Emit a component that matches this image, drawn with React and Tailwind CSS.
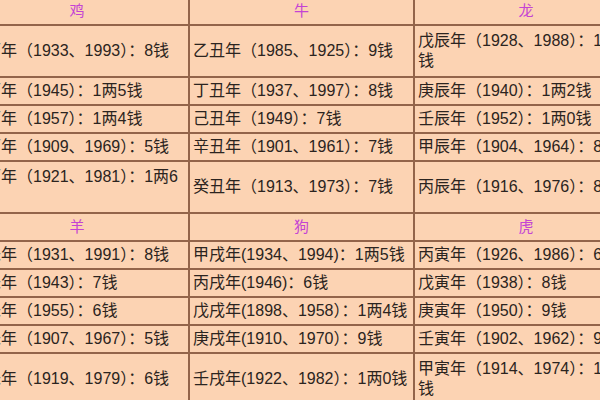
import React from "react";

const headers1 = ["鸡", "牛", "龙"];
const rows1 = [
  ["癸酉年（1933、1993）：8钱", "乙丑年（1985、1925）：9钱", "戊辰年（1928、1988）：1两2钱"],
  ["乙酉年（1945）：1两5钱", "丁丑年（1937、1997）：8钱", "庚辰年（1940）：1两2钱"],
  ["丁酉年（1957）：1两4钱", "己丑年（1949）：7钱", "壬辰年（1952）：1两0钱"],
  ["己酉年（1909、1969）：5钱", "辛丑年（1901、1961）：7钱", "甲辰年（1904、1964）：8钱"],
  ["辛酉年（1921、1981）：1两6钱", "癸丑年（1913、1973）：7钱", "丙辰年（1916、1976）：8钱"],
];

const headers2 = ["羊", "狗", "虎"];
const rows2 = [
  ["癸未年（1931、1991）：8钱", "甲戌年(1934、1994)：1两5钱", "丙寅年（1926、1986）：6钱"],
  ["乙未年（1943）：7钱", "丙戌年(1946)：6钱", "戊寅年（1938）：8钱"],
  ["丁未年（1955）：6钱", "戊戌年(1898、1958）：1两4钱", "庚寅年（1950）：9钱"],
  ["己未年（1907、1967）：5钱", "庚戌年(1910、1970）：9钱", "壬寅年（1902、1962）：9钱"],
  ["辛未年（1919、1979）：6钱", "壬戌年(1922、1982）：1两0钱", "甲寅年（1914、1974）：1两2钱"],
];

const tall1 = [true, false, false, false, true];
const tall2 = [false, false, false, false, true];

const Header = ({ items }) => (
  <tr className="h-[28px]">
    {items.map((h) => (
      <td
        key={h}
        className="border-2 border-[#93644a] text-center text-[15px] text-[#c443d4]"
      >
        {h}
      </td>
    ))}
  </tr>
);

const Rows = ({ rows, tall }) =>
  rows.map((r, i) => (
    <tr key={i} className={tall[i] ? "h-[52px]" : "h-[28px]"}>
      {r.map((c, j) => (
        <td
          key={j}
          className="border-2 border-[#93644a] px-[3px] align-middle leading-[20px] text-[16px] text-[#2b2420] break-all"
        >
          {c}
        </td>
      ))}
    </tr>
  ));

export default function App() {
  return (
    <div
      className="w-[600px] h-[400px] overflow-hidden bg-[#fcd3b3]"
      style={{ fontFamily: '"Liberation Sans", "Noto Sans CJK SC", sans-serif' }}
    >
      <table className="table-fixed border-collapse ml-[-36px] mt-[-4px] w-[673px]">
        <colgroup>
          <col className="w-[224px]" />
          <col className="w-[225px]" />
          <col className="w-[224px]" />
        </colgroup>
        <tbody>
          <Header items={headers1} />
          <Rows rows={rows1} tall={tall1} />
          <Header items={headers2} />
          <Rows rows={rows2} tall={tall2} />
        </tbody>
      </table>
    </div>
  );
}
